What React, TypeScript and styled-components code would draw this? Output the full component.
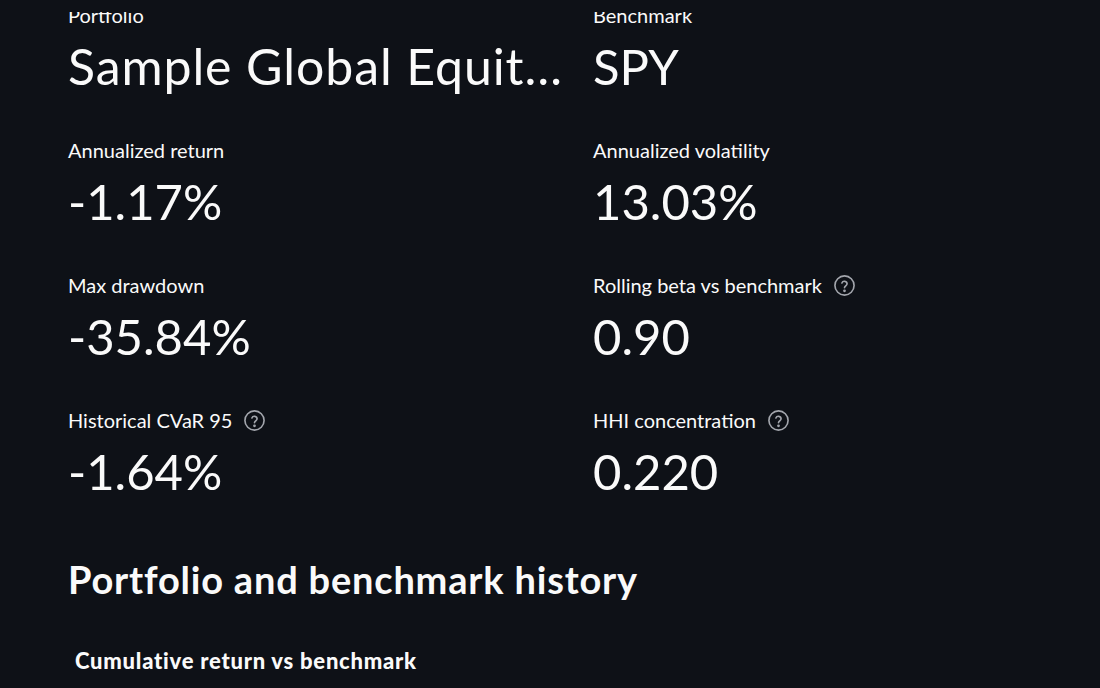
import React from "react";
import styled, { createGlobalStyle } from "styled-components";

const Global = createGlobalStyle`
  html, body { margin: 0; padding: 0; background: #0e1117; }
  body {
    font-family: "Lato", "Noto Sans", sans-serif;
    color: #fafafa;
    overflow: hidden;
  }
`;

const Page = styled.main`
  position: relative;
  width: 1100px;
  height: 688px;
  overflow: hidden;
  background: #0e1117;
`;

const TopBar = styled.header`
  position: absolute;
  top: 0;
  left: 0;
  right: 0;
  height: 12px;
  background: #0e1117;
  z-index: 2;
`;

const Content = styled.div`
  padding: 0 6px 0 68px;
`;

const MetricGrid = styled.div`
  display: grid;
  grid-template-columns: 501px 501px;
  column-gap: 24px;
  row-gap: 37px;
`;

const Metric = styled.div`
  display: flex;
  flex-direction: column;
  min-width: 0;
  height: 98px;
`;

const LabelRow = styled.div`
  display: flex;
  align-items: center;
  gap: 11px;
  height: 30px;
  font-size: 20px;
  line-height: 30px;
  color: #fafafa;
  white-space: nowrap;
`;

const HelpIcon = styled.svg`
  width: 23px;
  height: 23px;
  flex: none;
  color: #a3a6ad;
`;

const Value = styled.div<{ $wide?: boolean }>`
  margin-top: 4px;
  font-size: ${(p) => (p.$wide ? "50px" : "49px")};
  line-height: 64px;
  letter-spacing: ${(p) => (p.$wide ? "0.9px" : "0")};
  white-space: nowrap;
  overflow: hidden;
  text-overflow: ellipsis;
  color: #fafafa;
`;

const Heading = styled.h2`
  margin: 0;
  padding-top: 51px;
  font-size: 38px;
  font-weight: 700;
  letter-spacing: 0.8px;
  line-height: 50px;
  color: #fafafa;
`;

const ChartTitle = styled.h3`
  margin: 0;
  padding: 42px 0 0 7px;
  font-size: 22px;
  font-weight: 900;
  letter-spacing: 0.75px;
  line-height: 30px;
  color: #fafafa;
`;

const Help = () => (
  <HelpIcon viewBox="0 0 24 24" fill="none" stroke="currentColor" strokeWidth={1.7} strokeLinecap="round" strokeLinejoin="round">
    <circle cx="12" cy="12" r="10" />
    <path d="M9.3 9.4a2.8 2.8 0 0 1 5.4 0.9c0 1.9-2.7 2.4-2.7 4.1" />
    <circle cx="12" cy="17.6" r="0.6" fill="currentColor" />
  </HelpIcon>
);

type M = { label: string; value: string; help?: boolean; wide?: boolean };

const metrics: M[] = [
  { label: "Portfolio", value: "Sample Global Equity Portfolio", wide: true },
  { label: "Benchmark", value: "SPY" },
  { label: "Annualized return", value: "-1.17%" },
  { label: "Annualized volatility", value: "13.03%" },
  { label: "Max drawdown", value: "-35.84%" },
  { label: "Rolling beta vs benchmark", value: "0.90", help: true },
  { label: "Historical CVaR 95", value: "-1.64%", help: true },
  { label: "HHI concentration", value: "0.220", help: true },
];

export default function App() {
  return (
    <Page>
      <Global />
      <TopBar />
      <Content>
        <MetricGrid>
          {metrics.map((m) => (
            <Metric key={m.label}>
              <LabelRow>
                <span>{m.label}</span>
                {m.help && <Help />}
              </LabelRow>
              <Value $wide={m.wide}>{m.value}</Value>
            </Metric>
          ))}
        </MetricGrid>
        <Heading>Portfolio and benchmark history</Heading>
        <ChartTitle>Cumulative return vs benchmark</ChartTitle>
      </Content>
    </Page>
  );
}
